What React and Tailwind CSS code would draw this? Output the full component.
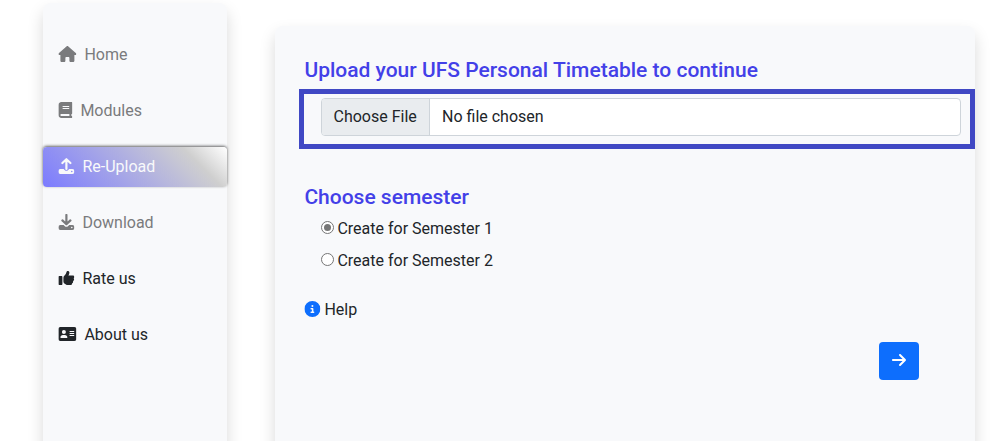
import { FaHouse, FaBook, FaThumbsUp, FaAddressCard, FaCircleInfo, FaArrowRight } from "react-icons/fa6";

function Tray({ up }) {
  return (
    <svg width="16" height="16" viewBox="0 0 16 16" fill="none" stroke="currentColor" strokeWidth="2.2" strokeLinecap="round" strokeLinejoin="round">
      <path d={up ? "M8 11V1.600M4 5 8 1.200l4 3.800" : "M8 1v9M4 6.400 8 10.200l4-3.800"} />
      <path
        fill="currentColor"
        stroke="none"
        fillRule="evenodd"
        d="M2 10.900h3.200l1 1a2.550 2.550 0 0 0 3.600 0l1-1H14a2 2 0 0 1 2 2V14a2 2 0 0 1-2 2H2a2 2 0 0 1-2-2v-1.100a2 2 0 0 1 2-2Zm11.400 1.850a.8.8 0 1 0 0 1.600.8.8 0 0 0 0-1.600Z"
      />
    </svg>
  );
}

const links = [
  { label: "Home", icon: <FaHouse className="h-4 w-[18px]" />, style: "text-[#7a7b7d]" },
  { label: "Modules", icon: <FaBook className="h-4 w-3.5" />, style: "text-[#7a7b7d]" },
  {
    label: "Re-Upload",
    icon: <Tray up />,
    style:
      "rounded text-[#f8f9fa] bg-[linear-gradient(45deg,#7b7bff_0%,#cfcfcf_80%,#ffffff_100%)] shadow-[0_-1px_3px_rgba(0,0,0,0.6)]",
  },
  { label: "Download", icon: <Tray />, style: "text-[#7a7b7d]" },
  { label: "Rate us", icon: <FaThumbsUp className="h-4 w-4" />, style: "text-[#212529]" },
  { label: "About us", icon: <FaAddressCard className="h-4 w-[18px]" />, style: "text-[#212529]" },
];

export default function App() {
  return (
    <div className="flex h-[441px] w-[993px] items-start overflow-hidden bg-white pl-[43px] font-['Roboto',sans-serif] text-base leading-6 text-[#212529]">
      <nav className="mt-[3px] flex h-[520px] w-[184px] shrink-0 flex-col gap-4 rounded-lg bg-[#f8f9fb] pt-8 shadow-[0_8px_16px_rgba(0,0,0,0.15)]">
        {links.map(({ label, icon, style }) => (
          <a key={label} className={`flex h-10 shrink-0 items-center gap-2 pl-[15.4px] ${style}`}>
            <span className="mb-0.5 shrink-0 translate-x-[0.4px]">{icon}</span>
            <span>{label}</span>
          </a>
        ))}
      </nav>

      <main className="mt-[26px] ml-12 h-[520px] w-[700px] shrink-0 rounded-lg bg-[#f8f9fb] pt-8 shadow-[0_8px_16px_rgba(0,0,0,0.15)]">
        <h5 className="pl-[29.400px] text-[21px] leading-6 font-medium text-[#4340e8]">
          Upload your UFS Personal Timetable to continue
        </h5>
        <div className="mt-[7px] ml-6 h-[60px] border-[5px] border-[#4048c4] pt-1 pr-[9px] pl-[17px]">
          <label className="flex h-[38px] overflow-hidden rounded border border-[#ced4da] bg-white">
            <span className="w-[108px] shrink-0 border-r border-[#ced4da] bg-[#e9ecef] pl-[11.500px] leading-9">Choose File</span>
            <span className="pl-3 leading-9">No file chosen</span>
          </label>
        </div>
        <h5 className="mt-9 pl-[29.400px] text-[21px] leading-6 font-medium text-[#4340e8]">Choose semester</h5>
        <div className="mt-2 flex flex-col gap-2 pl-[46px]">
          <label className="flex h-6 items-start gap-[3.400px]">
            <span className="mt-1 flex size-[13px] items-center justify-center rounded-full border border-[#767676] bg-white">
              <span className="size-[7px] rounded-full bg-[#767676]" />
            </span>
            Create for Semester 1
          </label>
          <label className="flex h-6 items-start gap-[3.400px]">
            <span className="mt-1 size-[13px] rounded-full border border-[#767676] bg-white" />
            Create for Semester 2
          </label>
        </div>
        <div className="mt-[25px] flex items-center gap-1 pl-[29.400px]">
          <FaCircleInfo className="mb-0.5 size-4 translate-x-[0.4px] text-[#0d6efd]" />
          Help
        </div>
        <div className="mt-5 flex justify-end pr-14">
          <button className="flex h-[38px] w-10 items-center justify-center rounded bg-[#0d6efd] text-white">
            <FaArrowRight className="mb-0.5 size-4" />
          </button>
        </div>
      </main>
    </div>
  );
}
